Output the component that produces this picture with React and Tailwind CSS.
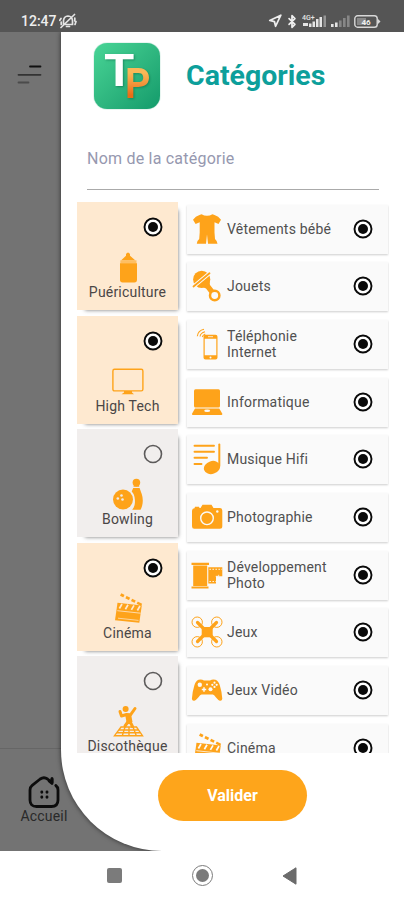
import React, { useState } from "react";
import { Bluetooth, Navigation } from "lucide-react";

// ================= ICONS =================
const Icon = ({ children, className = "" }) => (
  <svg
    viewBox="0 0 32 32"
    className={`w-8 h-8 shrink-0 ${className}`}
    fill="#fea31a"
    stroke="none"
  >
    {children}
  </svg>
);

const BottleIcon = () => (
  <Icon>
    <path d="M14 3q2-3.200 4 0v1.800l5.200 4.500H9.200L14 4.800z" />
    <path d="M8.300 9.300h16.200v3.300H8.300z" opacity=".6" />
    <path d="M8 12.300h17v16.500q0 2.600-2.600 2.600H10.600Q8 31.400 8 28.800z" />
  </Icon>
);

const MonitorIcon = () => (
  <Icon>
    <rect x=".9" y="4.300" width="30" height="21.600" rx="1.600" fill="none" stroke="#fea31a" strokeWidth="1.400" />
    <path d="M12 26h8v1.500l2 1.700H9.500l2.500-1.700z" />
  </Icon>
);

const BowlingIcon = () => (
  <Icon>
    <circle cx="24.400" cy="4.600" r="3.800" />
    <path d="M21.800 6.500h5.200l.3 2.200h-5.800z" />
    <path d="M21.200 10h6.400c1.500 4.500 3.200 7.500 3.200 12.500 0 4-1 7-2.300 9.200h-8.300c2.500-3 3-6.500 2.700-10-.3-3.500-1-6-3.200-8.200z" />
    <circle cx="11" cy="21.500" r="10" />
    <circle cx="9.500" cy="17.500" r="1.300" fill="#f0eceb" />
    <circle cx="5.800" cy="20.500" r="1.300" fill="#f0eceb" />
    <circle cx="10.500" cy="21.500" r="1.300" fill="#f0eceb" />
  </Icon>
);

const ClapIcon = ({ bg = "#fee9d0" }) => (
  <Icon>
    <path d="M9.300 1.200l20.800 10.600-1 2.200L8 3.800z" />
    <path d="M14 2.500l-2 4M19.500 5.500l-2 4M25 8.500l-2 4" stroke={bg} strokeWidth="2.300" />
    <path d="M5.500 10.800l24.300 2.700-2.500 17.300L3 28.200z" />
    <path d="M5.300 18.700l23.300 2.500" stroke={bg} strokeWidth=".8" />
    <path d="M10 12l-2.600 4.500M16 12.700l-2.600 4.500M22 13.400l-2.600 4.500M28 14l-2.600 4.500" stroke={bg} strokeWidth="1.700" />
    <path d="M6 26.200l20.500 2.200" stroke={bg} strokeWidth=".7" />
  </Icon>
);

const DiscoIcon = () => (
  <Icon>
    <circle cx="13.600" cy="4" r="3" />
    <path
      d="M8 6.500l1.500 4.500 5-1.500 4 .3L23 3.500M15.500 10.500l1.500 5-4 5.500M17.500 15.500l3 6"
      fill="none"
      stroke="#fea31a"
      strokeWidth="3"
      strokeLinecap="round"
      strokeLinejoin="round"
    />
    <path d="M13 9h6l1.500 8h-6z" />
    <path
      d="M9 22h15.500l6 8.700H2.500zM6.500 25h20.500M4.800 27.800h24M13 22l-2.700 8.700M17 22v8.700M21 22l3.300 8.700"
      fill="none"
      stroke="#fea31a"
      strokeWidth="1.400"
    />
  </Icon>
);

const OnesieIcon = () => (
  <Icon>
    <path d="M10.500 1.200q5.500 3 11 0l2 .7q4 1.300 6.500 4.800l-2.500 4.300-4-1.800v10.300l.5 6.500q2 1.500 2.500 4.800h-9.500l-1-9.300-1 9.300H5.800q.2-3.300 2.400-4.800l.5-6.500V9.200L4.600 11 2 6.700Q4.500 3.200 8.500 1.900z" />
  </Icon>
);

const RattleIcon = () => (
  <Icon>
    <path d="M9 15.500l9-6.500 1 6 5.500 7-4 3.500-5.500-7z" />
    <circle cx="10.700" cy="9.400" r="8.600" />
    <path d="M2.500 16.500L18.500 3.300" stroke="#fafafa" strokeWidth="3.800" />
    <path d="M2.500 16.500L18.500 3.300" stroke="#fea31a" strokeWidth="1.800" strokeLinecap="round" />
    <circle cx="23.700" cy="25.500" r="4.700" fill="#fafafa" stroke="#fea31a" strokeWidth="2.500" />
  </Icon>
);

const PhoneIcon = () => (
  <Icon>
    <path d="M14.500 6.700h10q2 0 2 2v20.800q0 2-2 2h-10q-2 0-2-2V8.700q0-2 2-2zm-.8 4v16.600h11.600V10.700z" fillRule="evenodd" />
    <path d="M17 8.700h5" stroke="#fafafa" strokeWidth=".8" />
    <circle cx="19.500" cy="29.400" r="1" fill="#fafafa" />
    <path d="M6.300 8.200Q7 2.500 13 1.300M9 8.500Q9.500 5 14 3.800M11.300 9q.5-2 3-3" fill="none" stroke="#fea31a" strokeWidth="1.100" />
  </Icon>
);

const LaptopIcon = () => (
  <Icon>
    <rect x="3" y="3.300" width="26" height="18.200" rx="1.500" />
    <path d="M4 22.500h24.300l3 5.200q.3 1.300-1 1.300H2q-1.300 0-1-1.300z" />
    <ellipse cx="16.200" cy="24.700" rx="3" ry="1.300" fill="#fafafa" />
  </Icon>
);

const MusicIcon = () => (
  <Icon>
    <path d="M3.500 2.700h19.500M3.500 8.700h19.500M3.500 14.700h12.500M3.500 21h7" stroke="#fea31a" strokeWidth="1.900" strokeLinecap="round" />
    <path d="M28.300 1.500v21" stroke="#fea31a" strokeWidth="2" strokeLinecap="round" />
    <ellipse cx="21" cy="24.500" rx="8.300" ry="6.400" transform="rotate(-18 21 24.500)" />
  </Icon>
);

const CameraIcon = () => (
  <Icon>
    <path d="M3.500 7.300l.5-1.500h4l.5 1.200h1l2-3.300h9l2 3.300h6.500q2.300.2 2.300 2.600v15.700q0 2.500-2.500 2.500H3.300Q1 27.800 1 25.300V9.700q0-2.200 2.500-2.400z" />
    <circle cx="16" cy="17.300" r="6.300" fill="none" stroke="#fafafa" strokeWidth="1.400" />
    <circle cx="26.300" cy="10.500" r="1.200" fill="#fafafa" />
  </Icon>
);

const FilmIcon = () => (
  <Icon>
    <path d="M.5 3.700h17.500v2.200H.5zM2.200 6.500h14V27h-14zM.5 27.500h17v2H.5z" />
    <path d="M17.300 8.300h14v9H25v7.300h-7.700z" />
    <path d="M18.500 10.300h12.500M18.500 22.500h6.500" stroke="#fafafa" strokeWidth="1" strokeDasharray="1.400 1.600" />
    <path d="M24.700 17.300h3v-1.500" stroke="#fafafa" strokeWidth=".8" fill="none" />
  </Icon>
);

const DroneIcon = () => (
  <Icon>
    <path d="M10.700 11h11v10.300h-11z" />
    <path d="M6.500 6.500l7 7M25.500 6.500l-7 7M6.500 25.500l7-7M25.500 25.500l-7-7" stroke="#fea31a" strokeWidth="3.200" strokeLinecap="round" />
    <g fill="none" stroke="#fea31a" strokeWidth="1">
      <circle cx="6.200" cy="6.200" r="5.200" />
      <circle cx="25.800" cy="6.200" r="5.200" />
      <circle cx="6.200" cy="25.800" r="5.200" />
      <circle cx="25.800" cy="25.800" r="5.200" />
    </g>
  </Icon>
);

const GamepadIcon = () => (
  <Icon>
    <path d="M7.500 5.800q3-1 5.500.7h6q2.500-1.700 5.500-.7 3 1 4.300 5.500 2.300 7.500 2.500 13.500-.3 2.300-2.500 1.900-1.500-.2-4-3.400-1.700-2.500-3-2.800H10.500q-1.300.3-3 2.800-2.500 3.200-4.200 3.400-2.200.4-2.400-1.900.2-6 2.500-13.500Q4.700 6.800 7.500 5.800z" />
    <circle cx="8.800" cy="10.800" r="2.200" fill="#fafafa" />
    <path d="M13 13.300v4.400M10.800 15.500h4.400" stroke="#fafafa" strokeWidth="1.500" />
    <circle cx="19.500" cy="15.300" r="2" fill="#fafafa" />
    <g fill="#fafafa">
      <circle cx="23.500" cy="8.700" r="1.100" />
      <circle cx="21.300" cy="10.800" r="1.100" />
      <circle cx="25.700" cy="10.800" r="1.100" />
      <circle cx="23.500" cy="12.900" r="1.100" />
      <circle cx="16" cy="10.500" r="1" />
    </g>
  </Icon>
);

// ================= DATA =================
const categories = [
  { name: "Puériculture", icon: <BottleIcon />, selected: true },
  { name: "High Tech", icon: <MonitorIcon />, selected: true },
  { name: "Bowling", icon: <BowlingIcon />, selected: false },
  { name: "Cinéma", icon: <ClapIcon />, selected: true },
  { name: "Discothèque", icon: <DiscoIcon />, selected: false },
];

const subCategories = [
  { name: "Vêtements bébé", icon: <OnesieIcon /> },
  { name: "Jouets", icon: <RattleIcon /> },
  { name: "Téléphonie Internet", icon: <PhoneIcon /> },
  { name: "Informatique", icon: <LaptopIcon /> },
  { name: "Musique Hifi", icon: <MusicIcon /> },
  { name: "Photographie", icon: <CameraIcon /> },
  { name: "Développement Photo", icon: <FilmIcon /> },
  { name: "Jeux", icon: <DroneIcon /> },
  { name: "Jeux Vidéo", icon: <GamepadIcon /> },
  { name: "Cinéma", icon: <ClapIcon bg="#fafafa" /> },
];

const Radio = ({ checked }) => (
  <svg viewBox="0 0 20 20" className="w-5 h-5 shrink-0">
    <circle
      cx="10"
      cy="10"
      r="8.500"
      fill={checked ? "#fff" : "none"}
      stroke={checked ? "#0a0a0a" : "#5c5a5a"}
      strokeWidth={checked ? 1.9 : 1.6}
    />
    {checked && <circle cx="10" cy="10" r="5" fill="#0a0a0a" />}
  </svg>
);

// ================= STATUS BAR =================
const StatusBar = () => (
  <div className="h-8 shrink-0 bg-[#555555] flex items-center justify-between pl-[21px] pr-[22px] pt-[10px] text-[#eeeeee]">
    <div className="flex items-center gap-[2px]">
      <span className="text-[14px] leading-4 font-medium">12:47</span>
      <svg viewBox="0 0 18 16" className="w-[18px] h-4" fill="none" stroke="#e4e4e4" strokeWidth="1.700" strokeLinecap="round">
        <path d="M4.500 11.500V7.500Q5 3.300 9 3q4 .3 4.500 4.500v4zM7.500 13.500h3M2 5.500L.8 7.300M2.200 9v2.500M15.800 5v3M17 8.500l-1 3M2 14.500L15.500 1.500" />
      </svg>
    </div>
    <div className="flex items-center">
      <Navigation className="w-[14px] h-[14px]" strokeWidth={3} />
      <Bluetooth className="w-[14px] h-[15px] ml-[3px]" strokeWidth={3} />
      <svg viewBox="0 0 27 16" className="w-[27px] h-4 ml-[3px]" fill="#e4e4e4">
        <text x="0" y="6.800" fontSize="7" fontWeight="500">4G+</text>
        <rect x="1" y="10" width="5" height="3" />
        <rect x="7" y="10.500" width="2.500" height="3.500" />
        <rect x="10.500" y="8.500" width="2.500" height="5.500" />
        <rect x="14" y="6" width="2.500" height="8" />
        <rect x="17.500" y="4" width="2.500" height="10" />
        <rect x="21.500" y="2.500" width="2.500" height="11.500" opacity=".45" />
      </svg>
      <svg viewBox="0 0 19 16" className="w-[19px] h-4 ml-[2px]" fill="#e4e4e4">
        <rect x="0" y="11" width="2.600" height="3" />
        <rect x="4" y="9.500" width="2.600" height="4.500" />
        <g opacity=".35">
          <rect x="8" y="7.500" width="2.600" height="6.500" />
          <rect x="12" y="5" width="2.600" height="9" />
          <rect x="16" y="2.500" width="2.600" height="11.500" />
        </g>
      </svg>
      <svg viewBox="0 0 27 13" className="w-[27px] h-[13px] ml-1 mr-px">
        <rect x=".8" y=".8" width="22.400" height="11.400" rx="2.800" fill="none" stroke="#d8d8d8" strokeWidth="1.400" />
        <rect x="3" y="3" width="9" height="7" fill="#888888" />
        <path d="M23.500 3.500l3 3-3 3z" fill="#d8d8d8" />
        <text x="12" y="9.500" fontSize="8" fontWeight="700" fill="#eeeeee" textAnchor="middle">46</text>
      </svg>
    </div>
  </div>
);

// ================= LOGO =================
const Logo = () => (
  <div className="relative w-[66px] h-[66px] shrink-0 rounded-[13px] bg-gradient-to-br from-[#48d596] to-[#119b6b] shadow-[0_0_1px_#119b6b]">
    <span className="absolute left-[10px] top-[11px] text-[44px] leading-[34px] font-bold text-white [text-shadow:1px_1px_2px_rgba(0,90,60,0.5)] origin-left scale-x-[1.12]">
      T
    </span>
    <span className="absolute left-[31px] top-[23px] text-[43px] leading-[34px] font-bold bg-gradient-to-b from-[#f9b857] from-20% to-[#ea6d15] to-85% bg-clip-text text-transparent drop-shadow-[1px_1px_1px_rgba(0,80,50,0.4)] origin-left scale-x-[0.92]">
      P
    </span>
  </div>
);

export default function App() {
  const [search, setSearch] = useState("");
  const [selected, setSelected] = useState(categories.map((c) => c.selected));

  const toggle = (idx) => {
    setSelected((prev) => prev.map((v, i) => (i === idx ? !v : v)));
  };

  return (
    <div className="w-[404px] h-[900px] flex flex-col bg-white font-[Roboto,sans-serif] overflow-hidden">
      <StatusBar />

      <div className="relative h-[819px] shrink-0 bg-[#737373] overflow-hidden flex flex-col">
        {/* Page behind the drawer */}
        <div className="flex-1 pt-[33px] pl-[17px]">
          <svg viewBox="0 0 25 20" className="w-[25px] h-5" strokeWidth="1.800" strokeLinecap="round">
            <path d="M13 1.500h10.500" stroke="#111111" />
            <path d="M1.500 9.800h22" stroke="#333333" />
            <path d="M1.500 17.500h10" stroke="#4b4b4b" />
          </svg>
        </div>
        <div className="h-[103px] border-t border-[#666666] pl-5 pt-[27px]">
          <div className="w-12 flex flex-col items-center text-[#292929]">
            <svg viewBox="0 0 32 32" className="w-8 h-8" fill="none" stroke="#0c0c0c" strokeWidth="2.800" strokeLinecap="round" strokeLinejoin="round">
              <path d="M27.800 9.500Q30 11 30 14v10q0 6.500-6.500 6.500h-15Q2 30.500 2 24V14q0-3 2.200-4.700l8-6.300Q16 .5 19.500 3L24 6.500V2.700" />
              <path d="M24 3v4.500l-3-2.500" fill="#0c0c0c" />
              <path d="M13.800 16v.2M19 16v.2M13.800 21v.2M19 21v.2" strokeWidth="2.900" />
            </svg>
            <span className="text-[14px] leading-4 tracking-[0.2px]">Accueil</span>
          </div>
        </div>

        {/* DRAWER */}
        <div className="absolute inset-y-0 right-0 w-[343px] bg-white rounded-bl-[101px] shadow-[0_0_5px_rgba(0,0,0,0.6)] flex flex-col">
          <div className="flex items-center gap-[26px] pl-[33px] pt-[11px]">
            <Logo />
            <h1 className="text-[28.5px] leading-8 font-bold text-[#0d9f9b]">Catégories</h1>
          </div>

          <input
            value={search}
            onChange={(e) => setSearch(e.target.value)}
            placeholder="Nom de la catégorie"
            className="ml-[26px] mt-[17px] w-[292px] h-[64px] pt-[2px] text-[16px] tracking-[0.22px] border-b-[1.5px] border-[#aaaaaa] outline-none placeholder:text-[#9698af]"
          />

          <div className="mt-3 h-[551px] shrink-0 ml-4 mr-[15px] flex gap-2 overflow-hidden">
            {/* CATEGORIES */}
            <div className="w-[101px] shrink-0 flex flex-col gap-[5.6px]">
              {categories.map((cat, idx) => (
                <div
                  key={cat.name}
                  onClick={() => toggle(idx)}
                  className={`h-[108px] shrink-0 flex flex-col items-center pt-[15px] shadow-[4px_4px_4px_-4px_rgba(0,0,0,0.55)] ${
                    selected[idx] ? "bg-[#fee9d0]" : "bg-[#f1eeed]"
                  }`}
                >
                  <div className="self-end mr-[15px]">
                    <Radio checked={selected[idx]} />
                  </div>
                  <div className="mt-[14px]">{cat.icon}</div>
                  <span className="pt-px text-[14px] leading-4 tracking-[0.2px] text-[#4a4646]">
                    {cat.name}
                  </span>
                </div>
              ))}
            </div>

            {/* SUB CATEGORIES */}
            <div className="flex-1 flex flex-col gap-[8.7px] pt-[2.5px] pl-[0.5px] pr-px">
              {subCategories.map((sub) => (
                <div
                  key={sub.name}
                  className="h-[49px] shrink-0 bg-[#fafafa] flex items-center pl-1 pb-[1px] pr-[15px] shadow-[0_1px_2px_rgba(0,0,0,0.2)]"
                >
                  {sub.icon}
                  <span className="flex-1 ml-[4.5px] pr-4 text-[14px] leading-4 tracking-[0.2px] text-[#505050]">
                    {sub.name}
                  </span>
                  <Radio checked />
                </div>
              ))}
            </div>
          </div>

          <button className="mt-[17px] ml-[97px] w-[149px] h-[51px] shrink-0 rounded-full bg-[#fea51b] text-white text-[16px] font-bold">
            Valider
          </button>
        </div>
      </div>

      {/* ANDROID NAV */}
      <div className="flex-1 flex items-center bg-white pl-[107px]">
        <div className="w-[15px] h-[15px] rounded-[2px] bg-[#7b7b7b]"></div>
        <div className="ml-[70px] w-[21px] h-[21px] rounded-full border-[1.5px] border-[#7b7b7b] flex items-center justify-center">
          <div className="w-[13px] h-[13px] rounded-full bg-[#7b7b7b]"></div>
        </div>
        <svg viewBox="0 0 15 18" className="w-[15px] h-[18px] ml-[69px]" fill="#6b6b6b">
          <path d="M14 .8v16.400L1 9z" stroke="#6b6b6b" strokeLinejoin="round" />
        </svg>
      </div>
    </div>
  );
}
